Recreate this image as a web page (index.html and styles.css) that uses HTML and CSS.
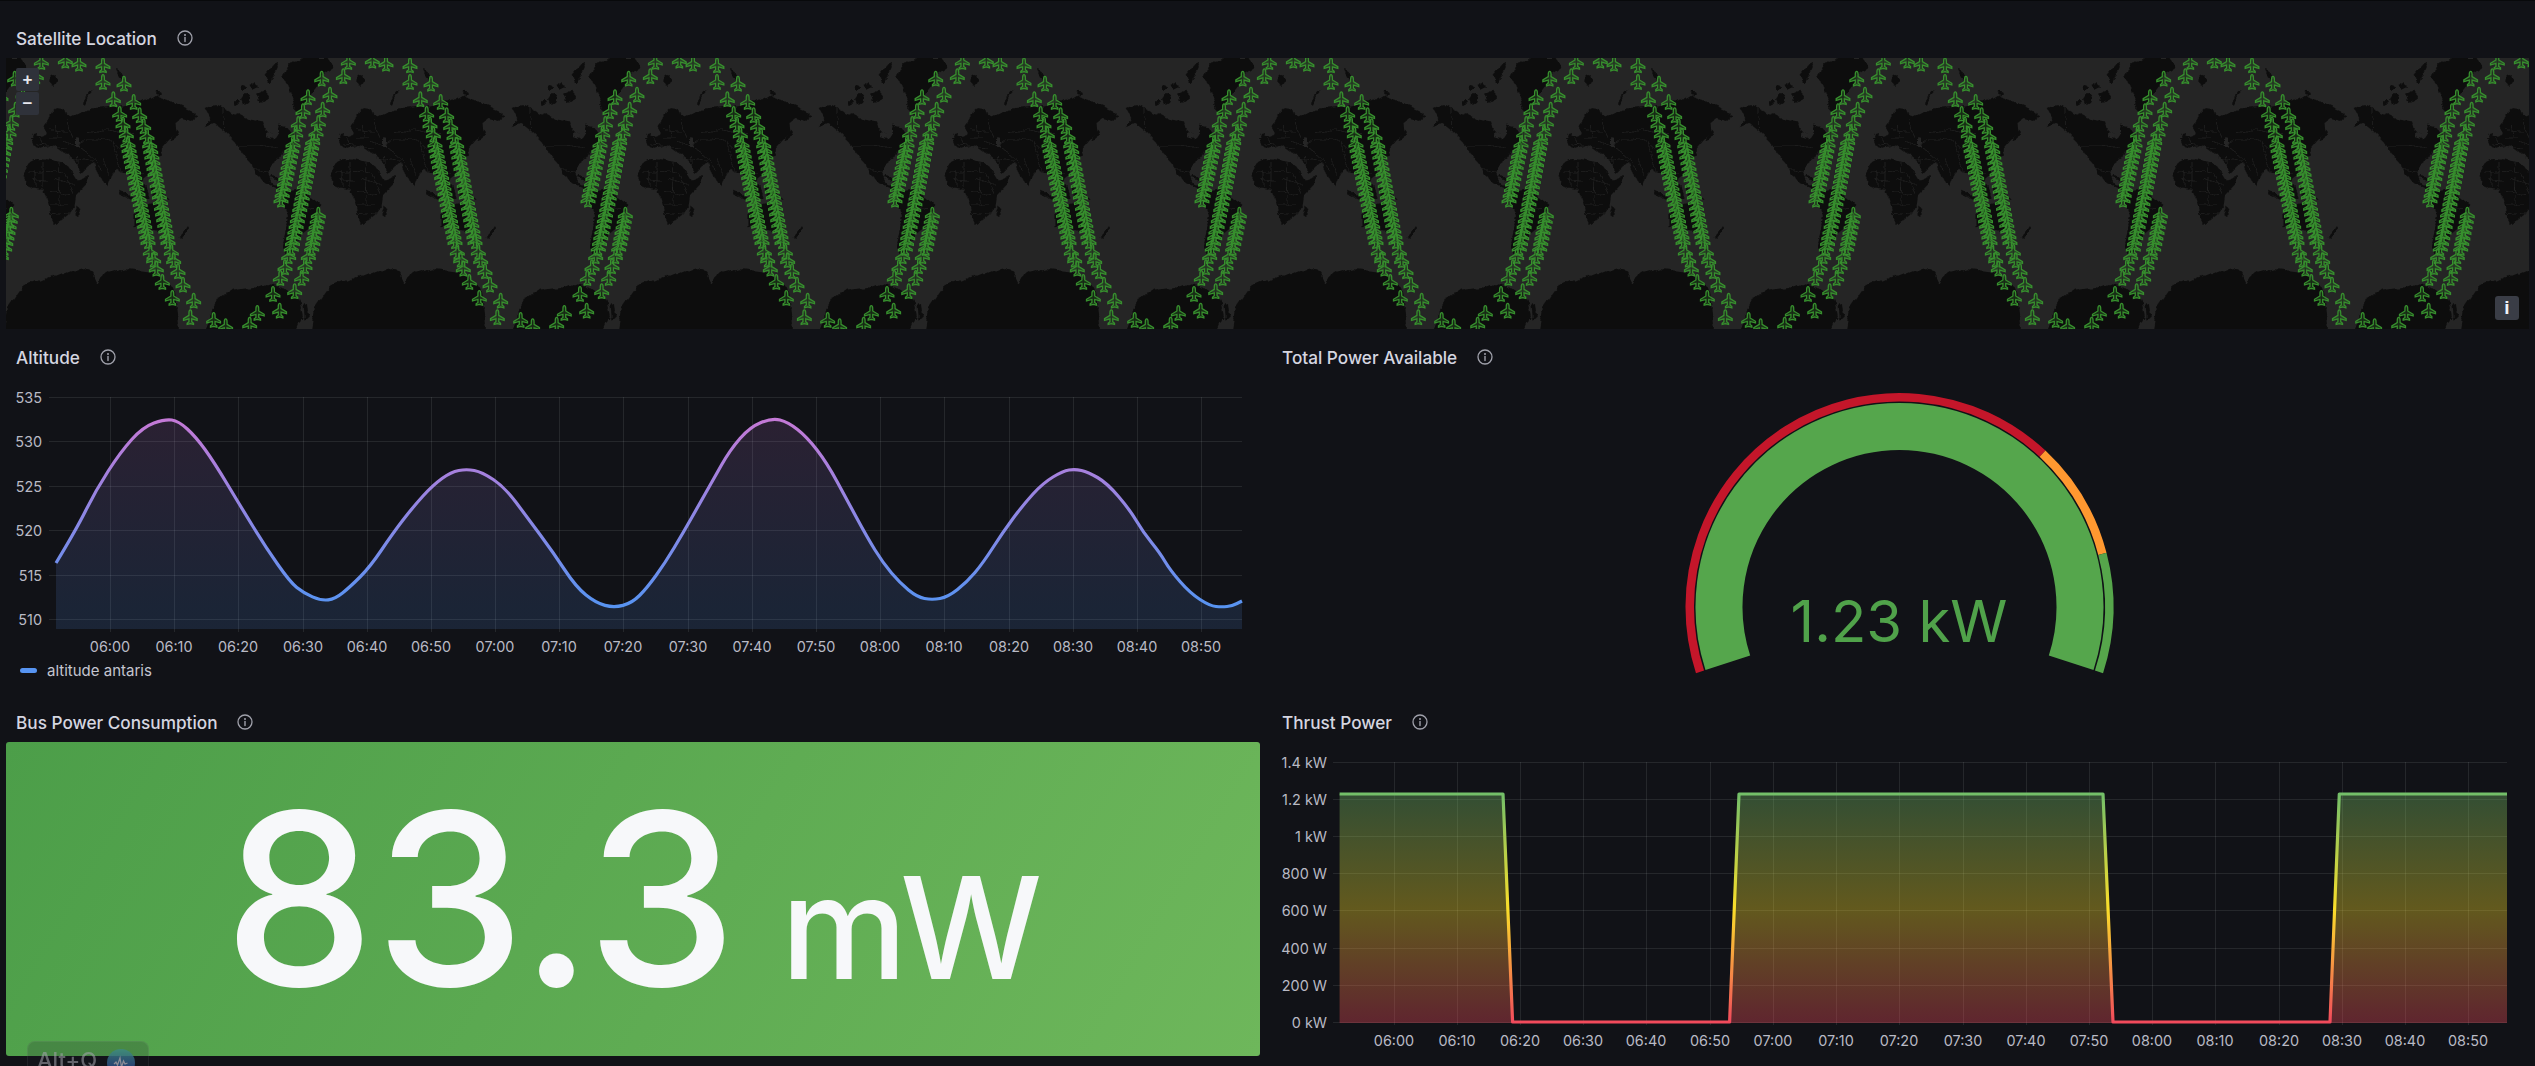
FILE: index.html
```html
<!DOCTYPE html>
<html lang="en">
<head>
<meta charset="utf-8">
<title>Satellite dashboard</title>
<link rel="stylesheet" href="styles.css">
</head>
<body>
<svg class="defs" width="0" height="0" aria-hidden="true">
  <defs>
    <filter id="rough" x="-5%" y="-5%" width="110%" height="110%">
      <feTurbulence type="fractalNoise" baseFrequency=".03" numOctaves="3" seed="4" result="noise"/>
      <feDisplacementMap in="SourceGraphic" in2="noise" scale="16" xChannelSelector="R" yChannelSelector="G"/>
    </filter>
    <symbol id="info" viewBox="0 0 16 16">
      <circle cx="8" cy="8" r="7" fill="none" stroke="currentColor" stroke-width="1.3"/>
      <circle cx="8" cy="5" r="1" fill="currentColor"/>
      <path d="M8 7.5v4" stroke="currentColor" stroke-width="1.4" stroke-linecap="round"/>
    </symbol>
    <symbol id="plane" viewBox="0 0 14 15" overflow="visible">
      <path d="M7 .6C7.8.6 8.3 2 8.3 3.4V5.6L13.4 8.7V10.3L8.3 8.9V11.6L10 13V14.2L7 13.4 4 14.2V13L5.7 11.6V8.9L.6 10.3V8.7L5.7 5.6V3.4C5.7 2 6.2.6 7 .6Z" fill="#37872d" fill-opacity=".3" stroke="#37902e" stroke-width="1.2"/>
      <path d="M7 3V12" stroke="#111" stroke-width=".6" opacity=".6"/>
    </symbol>
    <g id="land" transform="scale(.33333)">
      <g filter="url(#rough)">
        <g fill="#0c0c0c">
          <path d="M118 262L112 240 128 232 150 240 165 232 155 205 172 165 190 148 212 150 222 170 232 175 262 165 300 150 345 148 400 140 440 130 490 110 520 125 560 140 615 175 600 185 565 180 548 195 550 225 525 250 505 272 510 292 495 300 470 315 470 345 448 365 440 395 425 375 410 345 385 345 372 335 360 345 340 385 318 350 300 315 285 325 265 345 245 305 225 290 210 282 195 270 190 262 165 268 140 272Z"/>
          <path d="M92 350L108 312 135 303 170 305 200 312 225 325 245 350 258 368 288 352 278 380 248 412 245 445 228 470 205 490 182 500 172 470 165 425 150 395 120 392 100 380Z"/>
          <path d="M252 442L262 450 252 478 243 470Z"/>
          <path d="M120 225L132 222 128 255 115 250Z"/>
          <path d="M172 55L190 48 194 66 180 84 170 70Z"/>
          <path d="M270 135L285 100 302 92 285 110 276 140Z"/>
          <path d="M370 32L385 45 392 65 378 62Z"/>
          <path d="M485 98L505 100 500 110 488 108Z"/>
          <path d="M533 248L540 230 555 218 558 226 545 245Z"/>
          <path d="M380 395L420 420 415 428 378 405Z"/>
          <path d="M420 370L460 385 470 420 430 410Z"/>
          <path d="M475 385L500 400 530 425 480 415Z"/>
          <path d="M425 470L445 445 470 440 490 430 505 455 525 490 510 520 480 515 450 500 425 505Z"/>
          <path d="M560 538L585 505 588 512 568 542Z"/>
          <path d="M635 150L665 142 690 150 720 170 740 165 770 185 810 190 815 215 845 245 860 225 855 200 885 205 905 230 895 262 870 280 860 300 835 320 825 345 835 375 860 385 880 395 872 402 845 385 815 375 790 345 770 310 745 285 730 255 700 225 665 195 635 205 655 180Z"/>
          <path d="M745 125L760 105 775 112 768 135 750 142Z"/>
          <path d="M790 110L815 95 825 125 800 135Z"/>
          <path d="M770 80L790 70 798 88 775 95Z"/>
          <path d="M815 50L850 12 858 30 830 75Z"/>
          <path d="M740 88L752 78 762 88 748 96Z"/>
          <path d="M720 130L735 122 740 135 725 140Z"/>
          <path d="M835 350L865 362 860 368 832 358Z"/>
          <path d="M868 55L885 20 930 0 1005 0 1021 25 985 55 975 85 945 120 925 170 905 150 895 110Z"/>
          <path d="M875 400L915 395 960 420 985 440 960 500 925 530 900 580 880 590 870 560 885 470 865 430Z"/>
          <path d="M37 816L45 745 95 680 205 648 265 632 300 640 312 678 335 645 400 634 470 640 510 660 545 690 550 740 555 816Z"/>
          <path d="M640 816L650 780 674 716 720 695 780 690 834 676 904 706 924 736 929 776 904 816Z"/>
          <path d="M932 738L945 735 948 775 935 788Z"/>
        </g>
        <path fill="#262626" d="M250 240L262 244 258 270 248 262Z M815 222L835 226 838 240 818 235Z"/>
        <path fill="none" stroke="#242424" stroke-width="2" d="M105 345L170 340 215 345M150 310V390M195 310L200 400M170 400L235 410M170 440L235 440M125 340L130 390M215 345L240 410M180 360L245 380M120 365L165 370M200 370L200 440M175 470L232 465M250 260C290 235 320 240 360 255L400 290M230 300L300 310M260 270L300 300M250 290L255 330M330 300L345 350M400 290L430 350M165 240H215M125 260L220 270M190 200L195 240M220 190L240 240M140 240L150 265M170 215L225 220M210 250L250 262M280 225L340 215 420 230M300 300L325 335M360 255L385 345M410 320L450 345M735 262H800L860 270M690 150L692 225M780 330L830 345M900 450L960 455M885 500L930 510M905 410L900 560"/>
      </g>
    </g>
    <linearGradient id="altLine" gradientUnits="userSpaceOnUse" x1="0" y1="418" x2="0" y2="608">
      <stop offset="0" stop-color="#c579d6"/>
      <stop offset="1" stop-color="#5794f2"/>
    </linearGradient>
    <linearGradient id="thrustLine" gradientUnits="userSpaceOnUse" x1="0" y1="794" x2="0" y2="1023">
      <stop offset="0" stop-color="#73bf69"/>
      <stop offset=".5" stop-color="#fade2a"/>
      <stop offset="1" stop-color="#f2495c"/>
    </linearGradient>
  </defs>
</svg>

<main class="dashboard">
  <section class="panel panel-wide">
    <header class="panel-head">
      <h2 class="panel-title">Satellite Location</h2>
      <svg class="info-icon"><use href="#info"/></svg>
    </header>
    <div class="map">
      <svg id="mapCanvas" class="map-canvas" width="2523" height="271"></svg>
      <div class="zoom-controls">
        <button class="zoom-btn" type="button">+</button>
        <button class="zoom-btn" type="button">−</button>
      </div>
      <button class="attr-btn" type="button">i</button>
    </div>
  </section>

  <section class="panel">
    <header class="panel-head">
      <h2 class="panel-title">Altitude</h2>
      <svg class="info-icon"><use href="#info"/></svg>
    </header>
    <svg id="altChart" class="chart chart-legended" viewBox="0 377 1266 283"></svg>
    <div class="legend">
      <span class="legend-mark"></span>
      <span class="legend-label">altitude antaris</span>
    </div>
  </section>

  <section class="panel">
    <header class="panel-head">
      <h2 class="panel-title">Total Power Available</h2>
      <svg class="info-icon"><use href="#info"/></svg>
    </header>
    <svg class="chart" viewBox="1266 377 1269 325">
      <path class="gauge-bar" d="M1727.84 662.78A180.5 180.5 0 1 1 2071.16 662.78"/>
      <path class="gauge-ring ring-red" d="M1700.01 671.82A209.75 209.75 0 0 1 2042.55 453.6"/>
      <path class="gauge-ring ring-orange" d="M2042.55 453.6A209.75 209.75 0 0 1 2102.4 553.8"/>
      <path class="gauge-ring ring-green" d="M2102.4 553.8A209.75 209.75 0 0 1 2098.99 671.82"/>
      <text class="gauge-value" x="1899" y="642">1.23 kW</text>
    </svg>
  </section>

  <section class="panel">
    <header class="panel-head">
      <h2 class="panel-title">Bus Power Consumption</h2>
      <svg class="info-icon"><use href="#info"/></svg>
    </header>
    <div class="stat">
      <span class="stat-value">83.3</span>
      <span class="stat-unit">mW</span>
    </div>
  </section>

  <section class="panel">
    <header class="panel-head">
      <h2 class="panel-title">Thrust Power</h2>
      <svg class="info-icon"><use href="#info"/></svg>
    </header>
    <svg id="thrustChart" class="chart" viewBox="1266 742 1269 324"></svg>
  </section>
</main>

<div class="shortcut">
  <span class="shortcut-key">Alt+Q</span>
  <span class="shortcut-dot">
    <svg viewBox="0 0 16 16" width="16" height="16"><path d="M1 9l2-2 1.5 3L7 3l1.5 9L10.500 6l1.500 3 2.500-1" fill="none" stroke="#a9aab5" stroke-width="1.300"/></svg>
  </span>
</div>

<script src="script.js"></script>
</body>
</html>
```
FILE: styles.css
```css
* { box-sizing: border-box; }

html, body {
  margin: 0;
  height: 100%;
  background: #111217;
  overflow: hidden;
}

body {
  font-family: Inter, "Liberation Sans", sans-serif;
  color: #ccccdc;
  border-top: 1px solid #08090b;
}

.defs { position: absolute; }

.dashboard {
  display: grid;
  grid-template-columns: 1266px 1269px;
  grid-template-rows: 319px 365px 364px;
  padding-top: 17px;
}

.panel {
  display: flex;
  flex-direction: column;
  min-width: 0;
  min-height: 0;
}

.panel-wide { grid-column: 1 / 3; }

.panel-head {
  flex: none;
  height: 40px;
  display: flex;
  align-items: center;
  padding-left: 16px;
}

.panel-title {
  margin: 0;
  font-size: 17.200px;
  font-weight: 500;
  color: #d5d6e0;
}

.info-icon {
  width: 16px;
  height: 16px;
  margin-left: 20px;
  color: #a0a1ab;
}

.map {
  position: relative;
  margin: 0 6px;
  height: 271px;
  background: #252525;
  overflow: hidden;
}

.map-canvas {
  display: block;
  filter: blur(.4px);
}

.zoom-controls {
  position: absolute;
  left: 10px;
  top: 10px;
  display: flex;
  flex-direction: column;
  gap: 1px;
}

.zoom-btn {
  width: 23px;
  height: 23px;
  padding: 0;
  border: 0;
  border-radius: 2px;
  background: #2f323a;
  color: #e6e7ee;
  font: 700 17px/23px "Liberation Sans", sans-serif;
}

.attr-btn {
  position: absolute;
  right: 10px;
  bottom: 9px;
  width: 24px;
  height: 24px;
  padding: 0;
  border: 0;
  border-radius: 3px;
  background: #3a3d46;
  color: #f0f2fa;
  font: 700 19px/24px "Liberation Sans", sans-serif;
}

.chart {
  flex: 1;
  display: block;
  width: 100%;
  min-height: 0;
}

.chart-legended {
  flex: none;
  height: 283px;
}

.grid-line {
  stroke: rgba(240, 250, 255, .09);
  stroke-width: 1;
}

.tick {
  fill: #b9bac5;
  font-size: 14.400px;
  dominant-baseline: central;
}

.tick-x { text-anchor: middle; }
.tick-y { text-anchor: end; }

.series-line {
  fill: none;
  stroke-width: 3.200;
  stroke-linejoin: round;
}

.alt-fill { fill: url(#altLine); fill-opacity: .14; }
.alt-line { stroke: url(#altLine); }
.thrust-fill { fill: url(#thrustLine); fill-opacity: .35; }
.thrust-line { stroke: url(#thrustLine); }

.legend {
  flex: none;
  height: 20px;
  display: flex;
  align-items: center;
  gap: 10px;
  padding-left: 20px;
  font-size: 15px;
  color: #c4c5d0;
}

.legend-mark {
  width: 17px;
  height: 5px;
  border-radius: 3px;
  background: #5794f2;
}

.gauge-bar {
  fill: none;
  stroke: #55a64c;
  stroke-width: 47;
}

.gauge-ring {
  fill: none;
  stroke-width: 8.500;
}

.ring-red { stroke: #c4162a; }
.ring-orange { stroke: #ff9830; }
.ring-green { stroke: #56a64b; }

.gauge-value {
  fill: #50a24a;
  font-size: 58px;
  font-weight: 400;
  text-anchor: middle;
}

.stat {
  flex: 1;
  margin: 0 6px 10px;
  display: flex;
  align-items: center;
  justify-content: center;
  border-radius: 3px;
  background: linear-gradient(120deg, #4c9e49, #6eb75b);
  color: #f7f8fa;
  line-height: 1;
  white-space: nowrap;
}

.stat-value {
  font-size: 240px;
  font-weight: 500;
}

.stat-unit {
  margin-left: 44px;
  margin-top: 55px;
  font-size: 142px;
  font-weight: 500;
}

.shortcut {
  position: fixed;
  left: 27px;
  top: 1041px;
  width: 122px;
  height: 40px;
  padding-left: 9px;
  display: flex;
  align-items: flex-start;
  gap: 10px;
  border: 1px solid rgba(255, 255, 255, .06);
  border-radius: 8px;
  background: rgba(30, 30, 40, .2);
}

.shortcut-key {
  margin-top: 5px;
  font-size: 22px;
  font-weight: 500;
  line-height: 27px;
  color: rgba(165, 165, 175, .55);
}

.shortcut-dot {
  width: 28px;
  height: 28px;
  margin-top: 7px;
  display: flex;
  align-items: center;
  justify-content: center;
  border-radius: 50%;
  background: linear-gradient(#3d8a84, #27308f);
  opacity: .8;
}
```
FILE: script.js
```js
const NS = 'http://www.w3.org/2000/svg';

function make(tag, attrs, parent, text) {
  const node = document.createElementNS(NS, tag);
  for (const key in attrs) node.setAttribute(key, attrs[key]);
  if (text !== undefined) node.textContent = text;
  parent.appendChild(node);
  return node;
}

/* ---------- map: one world of plane markers, repeated ---------- */
function dense(points, step) {
  const out = [];
  for (let i = 0; i < points.length - 1; i++) {
    const [ax, ay] = points[i];
    const [bx, by] = points[i + 1];
    const len = Math.hypot(bx - ax, by - ay);
    const n = Math.max(1, Math.round(len / step));
    for (let j = 0; j < n; j++) out.push([ax + (bx - ax) * j / n, ay + (by - ay) * j / n]);
  }
  out.push(points[points.length - 1]);
  return out;
}

const STEP = 17;
const tracks = [
  [[258,17],[330,72],[361,124],[380,168],[390,200],[400,230],
    ...dense([[405,258],[465,550]], STEP),
    [472,582],[482,605],[490,632],[508,672],[538,720],[592,778],[698,805]],
  [[330,22],[393,77],[422,132],[440,172],[452,205],[462,235],
    ...dense([[470,260],[525,550]], STEP),
    [535,582],[542,607],[555,640],[570,680],[602,728],[662,786]],
  [[770,800],[793,765],[840,708],[862,660],[876,628],[887,595],
    ...dense([[895,570],[931,400],[959,250]], STEP),
    [969,225],[976,195],[989,155],[1011,110],[1051,55],[1138,8]],
  [[860,758],[905,700],[926,660],[936,625],[946,595],
    ...dense([[956,570],[976,470]], STEP)],
  [...dense([[864,425],[900,258]], STEP),
    [908,228],[916,198],[930,160],[945,118],[986,62],[1066,12]]
];

const mapCanvas = document.getElementById('mapCanvas');
const defs = document.querySelector('.defs defs');
const world = make('g', { id: 'world' }, defs);
make('use', { href: '#land' }, world);
tracks.flat().forEach(([x, y]) => {
  make('use', { href: '#plane', x: x / 3 - 7.5, y: y / 3 - 8, width: 15, height: 16 }, world);
});
for (let k = -1; k <= 8; k++) {
  make('use', { href: '#world', x: -13 + 307 * k }, mapCanvas);
}

/* ---------- time series ---------- */
function smooth(points) {
  let d = `M${points[0][0]} ${points[0][1]}`;
  for (let i = 1; i < points.length - 1; i++) {
    const mx = (points[i][0] + points[i + 1][0]) / 2;
    const my = (points[i][1] + points[i + 1][1]) / 2;
    d += `Q${points[i][0]} ${points[i][1]} ${mx} ${my}`;
  }
  const last = points[points.length - 1];
  return d + `L${last[0]} ${last[1]}`;
}

function straight(points) {
  return 'M' + points.map(p => p.join(' ')).join('L');
}

function drawAxes(svg, o) {
  o.yTicks.forEach(([label, y]) => {
    make('line', { class: 'grid-line', x1: o.gridLeft, x2: o.right, y1: y + .5, y2: y + .5 }, svg);
    make('text', { class: 'tick tick-y', x: o.labelRight, y }, svg, label);
  });
  for (let i = 0; i < 18; i++) {
    const minutes = 360 + i * 10;
    const label = String(Math.floor(minutes / 60)).padStart(2, '0') + ':' + String(minutes % 60).padStart(2, '0');
    const x = Math.round(o.x0 + i * o.dx);
    make('line', { class: 'grid-line', x1: x + .5, x2: x + .5, y1: o.top, y2: o.bottom + 3 }, svg);
    make('text', { class: 'tick tick-x', x, y: o.labelY }, svg, label);
  }
}

const altitude = [
  [56,563],[76,530],[96,490],[120.5,452],[143,427],[165,419],[178.6,421],[196,437],[214,462],[241,507],
  [265.6,547],[290,582],[303.6,593],[321.4,600.7],[335,599],[350,587],[370,567],[393,533],[413,507],[433,485],
  [451,472],[466.5,469],[482,472],[504.5,487],[527,517],[553.6,553],[576,587],[596,603],[614,607.7],[632,603],
  [647,588],[665,563],[683,533],[700,503],[713,480],[730,450],[750,427],[772,418],[788,422],[807,437],
  [827,463],[847,500],[867,537],[883,563],[900,583],[917,597],[932,600],[948,597],[967,582],[983,563],
  [1003,532],[1023,505],[1043,483],[1063,471],[1075,469],[1088,472],[1107,483],[1130,510],[1143,532],[1160,553],
  [1170,570],[1190,593],[1210,606],[1222,607],[1232,606],[1242,601]
];

const altChart = document.getElementById('altChart');
drawAxes(altChart, {
  gridLeft: 49, right: 1242, top: 397, bottom: 629, labelRight: 42, labelY: 646,
  x0: 110, dx: 64.18,
  yTicks: [['535',397],['530',441],['525',486],['520',530],['515',575],['510',619]]
});
const altPath = smooth(altitude);
make('path', { class: 'alt-fill', d: `${altPath}L1242 629L56 629Z` }, altChart);
make('path', { class: 'series-line alt-line', d: altPath }, altChart);

const thrust = [
  [1339.6,794],[1503,794],[1512.6,1022],[1729.6,1022],[1739,794],[2103,794],[2113,1022],[2330,1022],[2339.3,794],[2507,794]
];

const thrustChart = document.getElementById('thrustChart');
drawAxes(thrustChart, {
  gridLeft: 1333, right: 2507, top: 762, bottom: 1022, labelRight: 1327, labelY: 1040,
  x0: 1393.6, dx: 63.22,
  yTicks: [['1.4 kW',762],['1.2 kW',799],['1 kW',836],['800 W',873],['600 W',910],['400 W',948],['200 W',985],['0 kW',1022]]
});
make('path', { class: 'thrust-fill', d: `${straight(thrust)}L2507 1023L1339.6 1023Z` }, thrustChart);
make('path', { class: 'series-line thrust-line', d: straight(thrust) }, thrustChart);
```
